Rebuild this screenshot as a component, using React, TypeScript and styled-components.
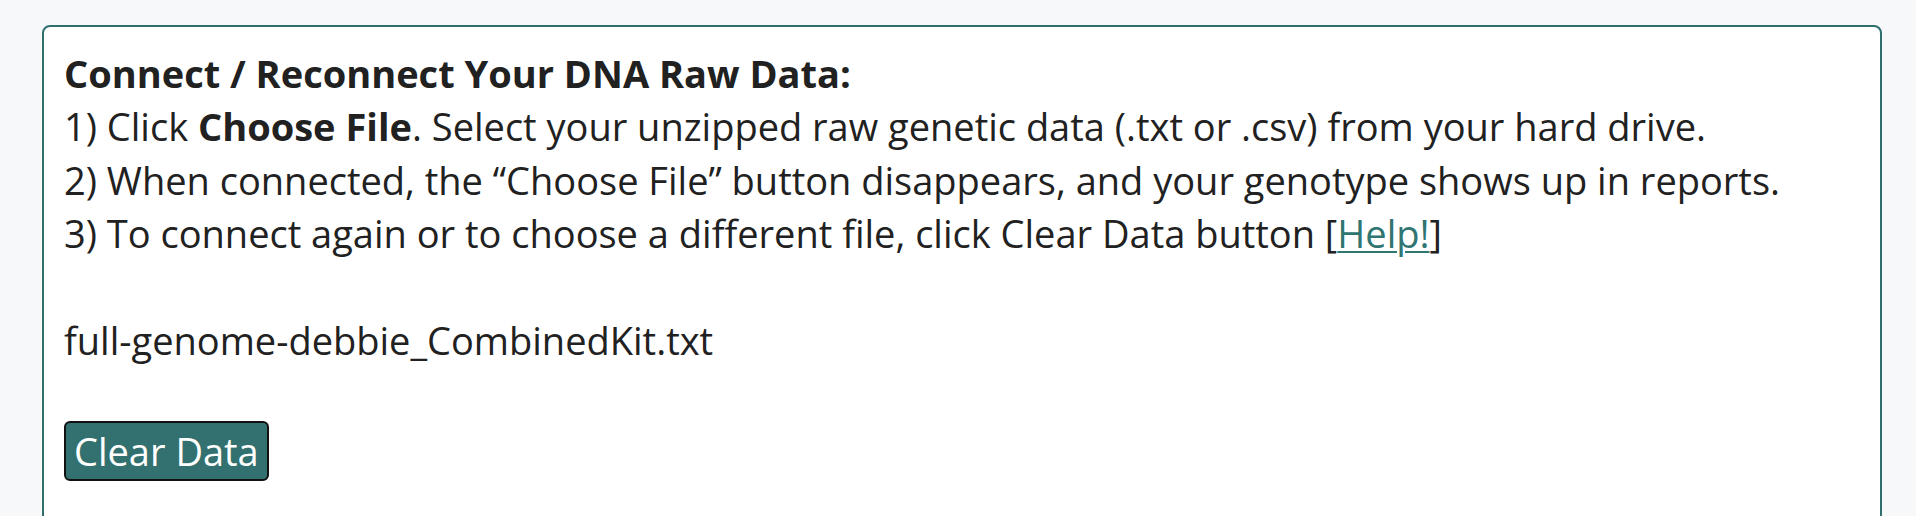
import React from "react";
import styled, { createGlobalStyle } from "styled-components";

const GlobalStyle = createGlobalStyle`
  html, body {
    margin: 0;
    padding: 0;
    background: #f7f8fa;
    font-family: "Open Sans", "Noto Sans", sans-serif;
    color: #212121;
  }
`;

const Page = styled.div`
  padding: 25px 34px 0 42px;
  height: 516px;
  overflow: hidden;
  box-sizing: border-box;
`;

const Panel = styled.section`
  background: #ffffff;
  border: 2px solid #2f6f6d;
  border-radius: 8px;
  padding: 20px 20px 40px;
  min-height: 600px;
  box-sizing: border-box;
  font-size: 38px;
  line-height: 53.4px;
`;

const Title = styled.div`
  font-weight: 700;
`;

const Line = styled.div``;

const Spacer = styled.div`
  height: 53.4px;
`;

const HelpLink = styled.a`
  color: #2f7571;
  text-decoration: underline;
  text-decoration-thickness: 2px;
  text-underline-offset: 3px;
`;

const FileName = styled.div``;

const ClearButton = styled.button`
  margin-top: 54px;
  font-family: inherit;
  font-size: 38px;
  line-height: 52px;
  color: #ffffff;
  background: #337170;
  border: 2px solid #111;
  border-radius: 6px;
  padding: 2px 8px;
  cursor: pointer;
`;

export default function App() {
  return (
    <>
      <GlobalStyle />
      <Page>
        <Panel>
          <Title>Connect / Reconnect Your DNA Raw Data:</Title>
          <Line>
            1) Click <b>Choose File</b>. Select your unzipped raw genetic data (.txt or .csv) from your hard drive.
          </Line>
          <Line>
            2) When connected, the “Choose File” button disappears, and your genotype shows up in reports.
          </Line>
          <Line>
            3) To connect again or to choose a different file, click Clear Data button [<HelpLink href="#">Help!</HelpLink>]
          </Line>
          <Spacer />
          <FileName>full-genome-debbie_CombinedKit.txt</FileName>
          <ClearButton type="button">Clear Data</ClearButton>
        </Panel>
      </Page>
    </>
  );
}
